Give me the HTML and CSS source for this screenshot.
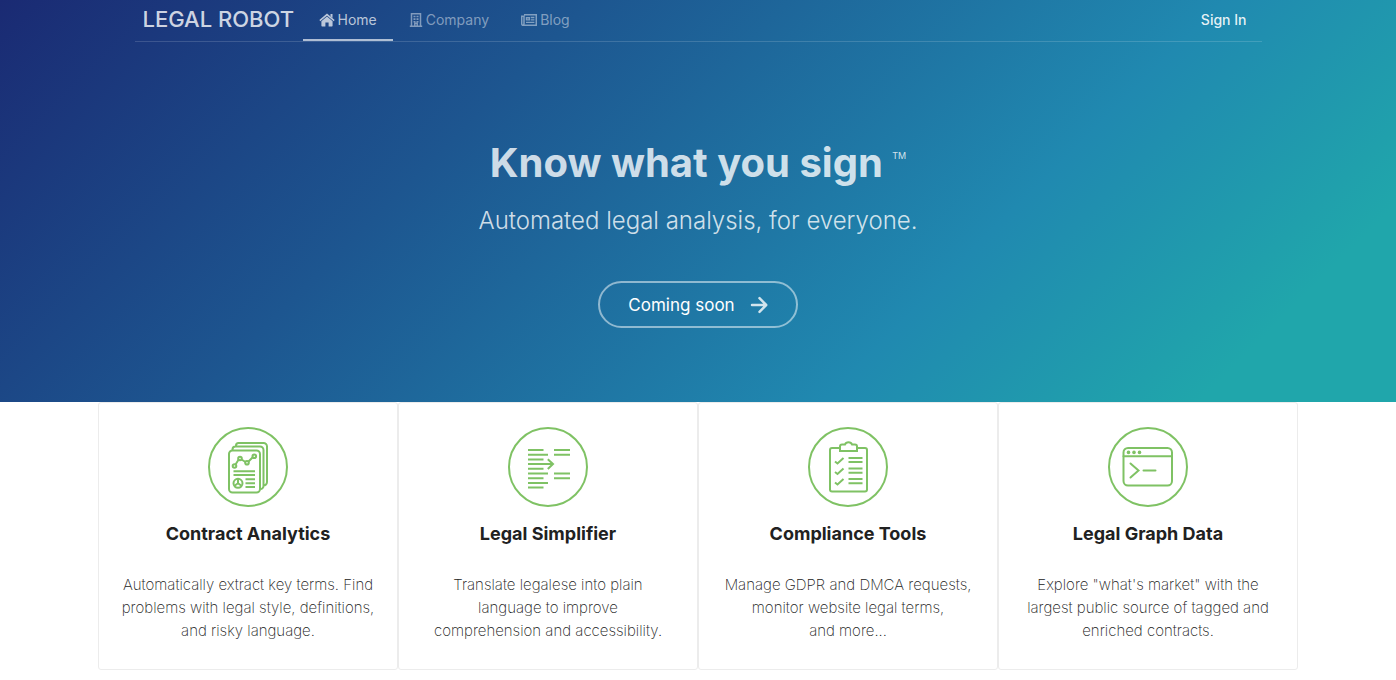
FILE: index.html
```html
<!DOCTYPE html>
<html lang="en">
<head>
    <meta charset="UTF-8">
    <meta name="viewport" content="width=device-width, initial-scale=1.0">
    <title>Legal Robot</title>
    <link rel="stylesheet" href="styles.css">
</head>
<body>
    <header class="hero">
        <nav class="menu">
            <a class="logo" href="#">LEGAL ROBOT</a>
            <a class="item active" href="#">
                <svg width="16" height="14" viewBox="0 0 16 14" fill="currentColor"><path d="M8 3.6l5.6 4.6v4.6a.7.7 0 0 1-.7.7H9.6V9.4H6.4v4.1H3.1a.7.7 0 0 1-.7-.7V8.200z"/><path d="M.8 7.600L8 1.600l7.200 6" fill="none" stroke="currentColor" stroke-width="1.500"/><path d="M11.500 1h2v4l-2-1.700z"/></svg>
                Home
            </a>
            <a class="item" href="#">
                <svg width="14" height="14" viewBox="0 0 14 14" fill="none" stroke="currentColor"><path d="M2.500 13V.7h9V13M.8 13.300h12.400M5.800 13v-2.700h2.400V13" stroke-width="1.500"/><path d="M4.500 3.500h2m1 0h2m-5 2.600h2m1 0h2m-5 2.600h2m1 0h2" stroke-width="1.600"/></svg>
                Company
            </a>
            <a class="item" href="#">
                <svg width="16" height="14" viewBox="0 0 16 14" fill="none" stroke="currentColor"><path d="M3 1.700h12.300v10.600H2.200a1.500 1.500 0 0 1-1.500-1.500V3.200H3v7.600a1 1 0 0 1-1 1" stroke-width="1.500"/><path d="M5.500 4.700h2.800v2.200H5.500zM9.700 4.500h3.700M9.700 6.900h3.700M5 9.400h8.400" stroke-width="1.400"/></svg>
                Blog
            </a>
            <a class="sign-in" href="#">Sign In</a>
        </nav>
        <div class="intro">
            <h1>Know what you sign <sup>TM</sup></h1>
            <p>Automated legal analysis, for everyone.</p>
            <button class="soon" type="button">
                Coming soon
                <svg width="18" height="18" viewBox="0 0 18 18" fill="none" stroke="currentColor" stroke-width="2.500" stroke-linecap="round" stroke-linejoin="round"><path d="M2 9h14M9.500 2.200L16.200 9l-6.700 6.800"/></svg>
            </button>
        </div>
    </header>

    <main class="features">
        <section class="feature">
            <svg class="icon" viewBox="0 0 80 80">
                <circle cx="40" cy="40" r="39"/>
                <rect x="21" y="23.500" width="31" height="42" rx="3.500"/>
                <path d="M24.500 23v-.5a3 3 0 0 1 3-3H52a3.500 3.500 0 0 1 3.500 3.500v36a3 3 0 0 1-3 3M28 19v-.5a2.500 2.500 0 0 1 2.500-2.500H55.500a3.500 3.500 0 0 1 3.500 3.500v35.500a3.500 3.500 0 0 1-3.500 3.500"/>
                <path d="M27.500 37.500l3.500-5.500M33.500 32.500l4 2.500M40.500 34.500l4.500-4.500"/>
                <circle cx="26.500" cy="39" r="1.800"/><circle cx="32" cy="31.500" r="1.800"/><circle cx="39" cy="35.800" r="1.800"/><circle cx="46.300" cy="29.300" r="1.800"/>
                <path d="M25.500 44.200h21.500M25.500 48h21.500M37.500 52.300h9.500M37.500 56.200h9.500M37.500 60h9.500"/>
                <circle cx="30" cy="56.300" r="4.500"/><path d="M30 52v4.300l3.500 2.500M30 56.300l-3.500 2.500"/>
            </svg>
            <h2>Contract Analytics</h2>
            <p>Automatically extract key terms. Find problems with legal style, definitions, and&nbsp;risky&nbsp;language.</p>
        </section>
        <section class="feature">
            <svg class="icon" viewBox="0 0 80 80">
                <circle cx="40" cy="40" r="39"/>
                <path d="M20 23h15.500M20 27.700h20M20 32.400h15.500M20 37.100h25M20 41.800h15.500M20 46.500h20M20 51.200h15.500M20 55.900h20M20 60.600h15.500M46 23h16M46 27.700h16M46 46.500h16M46 51.200h16M39.800 32.300l5.200 4.800-5.200 4.800"/>
            </svg>
            <h2>Legal Simplifier</h2>
            <p>Translate legalese into plain language&nbsp;to&nbsp;improve comprehension&nbsp;and&nbsp;accessibility.</p>
        </section>
        <section class="feature">
            <svg class="icon" viewBox="0 0 80 80">
                <circle cx="40" cy="40" r="39"/>
                <path d="M32 21H24a2 2 0 0 0-2 2v39.500a2 2 0 0 0 2 2h33a2 2 0 0 0 2-2V23a2 2 0 0 0-2-2h-8"/>
                <path d="M32 24v-4.500a2 2 0 0 1 2-2h3a3.700 3.200 0 0 1 7 0h3a2 2 0 0 1 2 2V24z"/>
                <path d="M40.500 31h14M40.500 35h14M40.500 41.500h14M40.500 45.700h14M40.500 52h14M40.500 56.200h14"/>
                <path d="M27 34.500l2.500 2 6-5.500M27 45l2.500 2 6-5.500M27 55.500l2.500 2 6-5.500"/>
            </svg>
            <h2>Compliance Tools</h2>
            <p>Manage GDPR and DMCA requests, monitor&nbsp;website&nbsp;legal&nbsp;terms, and&nbsp;more...</p>
        </section>
        <section class="feature">
            <svg class="icon" viewBox="0 0 80 80">
                <circle cx="40" cy="40" r="39"/>
                <rect x="15.500" y="21" width="48.500" height="37.500" rx="4.500"/>
                <path d="M15.500 29.300h48.500M22.500 36.500l8 7-8 7M35.500 43.500h12" stroke-linecap="round"/>
                <circle class="dot" cx="20.500" cy="25.400" r="1.800"/><circle class="dot" cx="26" cy="25.400" r="1.800"/><circle class="dot" cx="31.500" cy="25.400" r="1.800"/>
            </svg>
            <h2>Legal Graph Data</h2>
            <p>Explore "what's market" with the largest public source of tagged and enriched&nbsp;contracts.</p>
        </section>
    </main>
</body>
</html>
```
FILE: styles.css
```css
* {
    box-sizing: border-box;
}

body {
    margin: 0;
    font-family: Inter, "Liberation Sans", sans-serif;
    color: #212121;
    background: #fff;
}

a {
    color: inherit;
    text-decoration: none;
}

.hero {
    padding-bottom: 74px;
    color: rgba(255, 255, 255, 0.8);
    background: linear-gradient(135deg, #1a2a73 0%, #1d5690 33%, #2089b0 68%, #20a6ab 89%, #20a6ab 100%);
}

.menu {
    display: flex;
    max-width: 1127px;
    height: 42px;
    margin: 0 auto;
    padding: 0 15px 0 8px;
    border-bottom: 1px solid rgba(255, 255, 255, 0.15);
    font-size: 14px;
}

.logo {
    width: 160px;
    font-size: 22px;
    font-weight: 500;
    line-height: 39px;
    white-space: nowrap;
}

.item {
    display: flex;
    align-items: center;
    gap: 3px;
    padding: 0 16px;
    border-bottom: 2px solid transparent;
    color: rgba(255, 255, 255, 0.45);
}

.item.active {
    border-color: rgba(255, 255, 255, 0.65);
    color: rgba(255, 255, 255, 0.7);
}

.sign-in {
    margin-left: auto;
    font-weight: 500;
    line-height: 40px;
    color: rgba(255, 255, 255, 0.9);
}

.intro {
    padding-top: 94px;
    text-align: center;
}

.intro h1 {
    margin: 0;
    font-size: 40px;
    line-height: 54px;
}

.intro sup {
    font-size: 9px;
    font-weight: 400;
    line-height: 10px;
    vertical-align: 18px;
}

.intro p {
    margin: 12px 0 41px;
    font-size: 24px;
    font-weight: 300;
    line-height: 38px;
}

.soon {
    display: inline-flex;
    align-items: center;
    gap: 15px;
    height: 47px;
    padding: 0 28px;
    border: 2px solid rgba(255, 255, 255, 0.5);
    border-radius: 24px;
    background: none;
    color: #fff;
    font-family: inherit;
    font-size: 17px;
}

.soon svg {
    opacity: 0.8;
}

.features {
    display: grid;
    grid-template-columns: repeat(4, 1fr);
    max-width: 1200px;
    margin: 0 auto;
}

.feature {
    padding: 24px 20px 27px;
    border: 1px solid #ececec;
    border-radius: 3px;
    text-align: center;
}

.icon {
    display: block;
    width: 80px;
    height: 80px;
    margin: 0 auto;
    fill: none;
    stroke: #7fc264;
    stroke-width: 2;
}

.icon .dot {
    fill: #7fc264;
    stroke: none;
}

.feature h2 {
    margin: 14px 0 26px;
    font-size: 18px;
    line-height: 26px;
}

.feature p {
    margin: 0;
    font-size: 15px;
    font-weight: 200;
    line-height: 23px;
}
```
